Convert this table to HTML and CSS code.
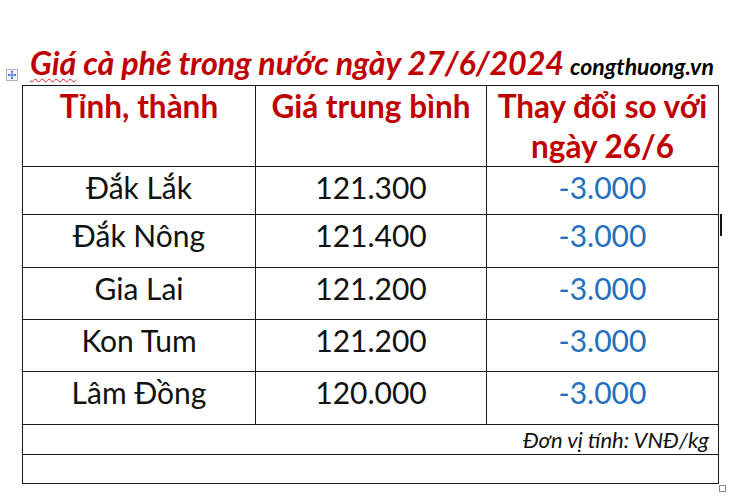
FILE: index.html
```html
<!DOCTYPE html>
<html lang="vi">
<head>
<meta charset="utf-8">
<link rel="stylesheet" href="styles.css">
</head>
<body>
<div class="page">
  <div class="title-row">
    <h1 class="title"><span class="spell">Giá</span> cà phê trong nước ngày 27/6/2024</h1>
    <span class="source">congthuong.vn</span>
  </div>
  <div class="table-wrap">
    <span class="move-handle">
      <svg width="12" height="12" viewBox="0 0 12 12">
        <rect x="0.5" y="0.5" width="11" height="11" fill="#f4f6fa" stroke="#a9b3c2"/>
        <path d="M6 2.2V9.8M2.2 6H9.8" stroke="#2b63c6" stroke-width="1"/>
        <path d="M6 1.6L4.6 3.2H7.4Z M6 10.4L4.6 8.8H7.4Z M1.6 6L3.2 4.6V7.4Z M10.4 6L8.8 4.6V7.4Z" fill="#2b63c6"/>
      </svg>
    </span>
    <table class="price-table">
      <colgroup>
        <col class="c1"><col class="c2"><col class="c3">
      </colgroup>
      <tr class="head">
        <th>Tỉnh, thành</th>
        <th>Giá trung bình</th>
        <th>Thay đổi so với<br>ngày 26/6</th>
      </tr>
      <tr class="r1"><td>Đắk Lắk</td><td>121.300</td><td class="chg">-3.000</td></tr>
      <tr class="r2"><td>Đắk Nông</td><td>121.400</td><td class="chg">-3.000</td></tr>
      <tr class="r3"><td>Gia Lai</td><td>121.200</td><td class="chg">-3.000</td></tr>
      <tr class="r4"><td>Kon Tum</td><td>121.200</td><td class="chg">-3.000</td></tr>
      <tr class="r5"><td>Lâm Đồng</td><td>120.000</td><td class="chg">-3.000</td></tr>
      <tr class="unit"><td colspan="3">Đơn vị tính: VNĐ/kg</td></tr>
      <tr class="blank"><td colspan="3"></td></tr>
    </table>
    <span class="ibeam"></span>
    <span class="resize-handle"></span>
  </div>
</div>
</body>
</html>
```
FILE: styles.css
```css
html, body {
  margin: 0;
  padding: 0;
  background: #ffffff;
}
body {
  width: 750px;
  height: 500px;
  overflow: hidden;
  font-family: Lato, "Open Sans", sans-serif;
}
.page {
  padding-top: 44px;
}
.title-row {
  display: flex;
  align-items: baseline;
  height: 41px;
  padding-left: 30px;
}
.title {
  margin: 0;
  font-size: 32.3px;
  font-weight: bold;
  font-style: italic;
  color: #c00000;
  line-height: 38px;
  white-space: nowrap;
  letter-spacing: -0.1px;
}
.spell {
  text-decoration: underline wavy #e02020;
  text-decoration-thickness: 1px;
  text-underline-offset: 3px;
}
.source {
  margin-left: 6px;
  font-size: 23px;
  font-weight: bold;
  font-style: italic;
  color: #000;
}
.table-wrap {
  position: relative;
  margin-left: 22px;
  width: 697px;
}
.move-handle {
  position: absolute;
  left: -16px;
  top: -16px;
  width: 12px;
  height: 12px;
  line-height: 0;
}
.price-table {
  border-collapse: collapse;
  width: 696px;
  table-layout: fixed;
  font-size: 30px;
}
.c1 { width: 233px; }
.c2 { width: 231px; }
.c3 { width: 232px; }
.price-table th,
.price-table td {
  border: 1.5px solid #1a1a1a;
  padding: 0;
  text-align: center;
  vertical-align: top;
  line-height: 40px;
  color: #111;
}
.price-table th {
  color: #c00000;
  font-weight: bold;
  font-size: 31.5px;
  padding-top: 0;
}
.head { height: 81px; }
.r1 { height: 48px; }
.r2 { height: 53px; }
.r3 { height: 52px; }
.r4 { height: 52px; }
.r5 { height: 53px; }
.price-table td {
  padding-top: 0;
}
.price-table .chg {
  color: #1f6fbe;
}
.price-table .unit td {
  height: 29px;
  padding: 0 9px 0 0;
  text-align: right;
  font-size: 22px;
  font-style: italic;
  line-height: 29px;
}
.price-table .blank td {
  height: 28px;
  padding: 0;
}
.ibeam {
  position: absolute;
  left: 698px;
  top: 129px;
  width: 2px;
  height: 22px;
  background: #111;
}
.resize-handle {
  position: absolute;
  left: 697px;
  bottom: -8px;
  width: 5px;
  height: 5px;
  border: 1px solid #8a8a8a;
  background: #fff;
}
```
